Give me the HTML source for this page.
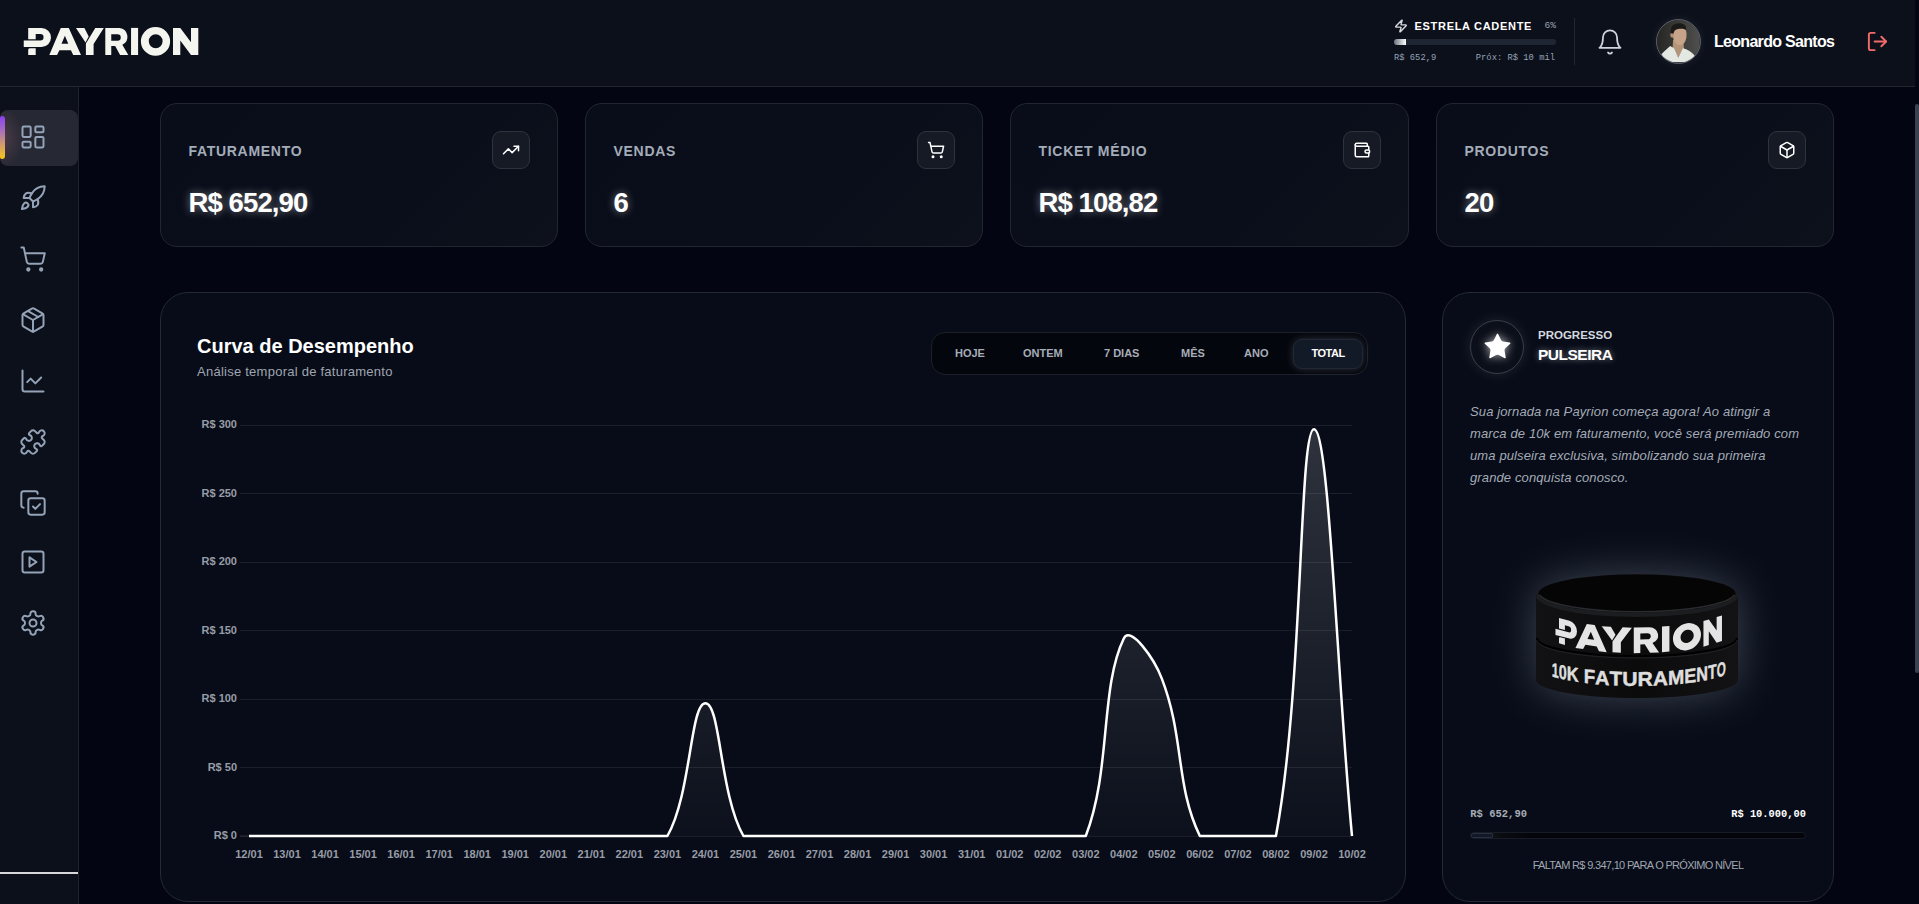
<!DOCTYPE html>
<html lang="pt-BR">
<head>
<meta charset="utf-8">
<title>Payrion Dashboard</title>
<style>
*{box-sizing:border-box;margin:0;padding:0}
html,body{width:1919px;height:904px;overflow:hidden;background:#030612;font-family:"Liberation Sans",sans-serif;color:#fff}
.abs{position:absolute}
svg.i{fill:none;stroke:currentColor;stroke-linecap:round;stroke-linejoin:round}
#header{position:absolute;left:0;top:0;width:1915px;height:87px;background:#0c101b;border-bottom:1px solid #23262f}
#sidebar{position:absolute;left:0;top:87px;width:79px;height:817px;background:#0c101a;border-right:1px solid #1e222c}
.card{position:absolute;background:linear-gradient(135deg,#090d19 0%,#0a0e1a 60%,#0d111c 100%);border:1px solid #222630;border-radius:17px}
.lbl{position:absolute;left:27.5px;top:37px;font-size:14px;font-weight:700;color:#a3acb9;letter-spacing:0.7px;line-height:20px;white-space:nowrap}
.val{position:absolute;left:27.5px;top:81px;font-size:27.5px;font-weight:700;color:#fff;line-height:36px;letter-spacing:-0.9px;text-shadow:0 0 8px rgba(255,255,255,.45);white-space:nowrap}
.ibox{position:absolute;right:27px;top:27px;width:38px;height:38px;border-radius:9px;background:#161a24;border:1px solid #2e323d;display:flex;align-items:center;justify-content:center;color:#fff}
.nav{position:absolute;left:18.7px;width:28px;height:28px;color:#94a3b8}
svg.chart{position:absolute;left:0;top:0}
</style>
</head>
<body>
<!-- HEADER -->
<div id="header">
  <svg class="abs" style="left:0;top:0" width="210" height="70" viewBox="0 0 210 70"><g fill="#f5f5f0">
<path d="M28.2,28 H41.5 A9.5,9.5 0 0 1 41.5,47 H23.75 V40.6 H40.3 A3.25,3.25 0 0 0 40.3,34.1 H35.7 V39.2 H28.2 Z"/>
<path d="M29.7,48.2 H35.7 V55 H28.2 V49.7 A1.5,1.5 0 0 1 29.7,48.2 Z"/>
<path d="M49.3,55 L60.8,28 H68.8 L81,55 H73.2 L70.9,50.3 H59.4 L57.05,55 Z M61.5,43.7 H68.3 L64.9,35.7 Z" fill-rule="evenodd"/>
<path d="M75.95,28 H84.4 L88.7,36.4 L85.5,42.6 Z"/>
<path d="M95.3,28 H103.8 L93.6,43.9 V55 H85.9 V43.6 Z"/>
<path d="M105.3,27.9 H119.5 A8.9,8.9 0 0 1 122.3,44.8 L128.3,55 H120.1 L115.2,45.9 H111.25 V55 H105.3 Z M111.25,34.2 H117.5 A3.25,3.25 0 0 1 117.5,40.7 H111.25 Z" fill-rule="evenodd"/>
<rect x="131.05" y="27.9" width="7.05" height="27.1"/>
<path d="M155.5,27.1 A14.6,14.35 0 1 1 155.5,55.8 A14.6,14.35 0 1 1 155.5,27.1 Z M155.7,34.2 A6.9,7 0 1 0 155.7,48.2 A6.9,7 0 1 0 155.7,34.2 Z" fill-rule="evenodd"/>
<path d="M173,27.9 H180.3 L191,42.2 V27.9 H198.3 V55 H191 L180.3,40.4 V55 H173 Z"/>
</g></svg>

  <!-- level progress -->
  <svg class="i abs" style="left:1393.7px;top:19px;color:#d8dbe0" width="14" height="14" viewBox="0 0 24 24" stroke-width="2.4"><path d="M4 14a1 1 0 0 1-.78-1.63l9.9-10.2a.5.5 0 0 1 .86.46l-1.92 6.02A1 1 0 0 0 13 10h7a1 1 0 0 1 .78 1.63l-9.9 10.2a.5.5 0 0 1-.86-.46l1.92-6.02A1 1 0 0 0 11 14z"/></svg>
  <div class="abs" style="left:1414.5px;top:19.3px;font-size:11px;font-weight:700;letter-spacing:0.7px;line-height:14px;white-space:nowrap">ESTRELA CADENTE</div>
  <div class="abs" style="left:1544.5px;top:19.5px;font-family:'Liberation Mono';font-size:9.5px;color:#9aa3b1;line-height:12px">6%</div>
  <div class="abs" style="left:1394.4px;top:39.4px;width:162px;height:6px;border-radius:3px;background:#1f2633;overflow:hidden"><div style="width:12px;height:6px;background:linear-gradient(90deg,#6b7280,#ffffff)"></div></div>
  <div class="abs" style="left:1394px;top:52px;font-family:'Liberation Mono';font-size:8.8px;color:#94a3b8;line-height:12px;white-space:nowrap">R$ 652,9</div>
  <div class="abs" style="left:1455px;top:52px;width:100px;text-align:right;font-family:'Liberation Mono';font-size:8.8px;color:#94a3b8;line-height:12px;white-space:nowrap">Próx: R$ 10 mil</div>
  <div class="abs" style="left:1574px;top:18px;width:1px;height:47px;background:#232733"></div>

  <svg class="i abs" style="left:1596.3px;top:27.6px;color:#cfd3da" width="28" height="28" viewBox="0 0 24 24" stroke-width="1.5"><path d="M6 8a6 6 0 0 1 12 0c0 7 3 9 3 9H3s3-2 3-9"/><path d="M10.3 21a1.94 1.94 0 0 0 3.4 0"/></svg>

  <!-- avatar -->
  <div class="abs" style="left:1656px;top:19px;width:45px;height:45px;border-radius:50%;border:1.5px solid #5b606c;overflow:hidden;background:#3a3c3a;box-shadow:0 0 10px rgba(255,255,255,.08)">
    <svg width="42" height="42" viewBox="0 0 44.5 44.5" style="position:absolute;left:0;top:0">
      <defs><linearGradient id="avbg" x1="0" y1="0" x2="1" y2="0"><stop offset="0" stop-color="#262725"/><stop offset="0.5" stop-color="#393a37"/><stop offset="1" stop-color="#4e4f4c"/></linearGradient></defs>
      <rect width="44.5" height="44.5" fill="url(#avbg)"/>
      <path d="M17,21 L28,21 L28.5,30 L22.5,40 L16.5,30 Z" fill="#b39479"/>
      <path d="M2,40 C5,35 9,32 14,27.5 L18,30 L22.5,40 L27.5,30 C32,31 37,34 41,39 L44.5,44.5 L0,44.5 Z" fill="#e4e8e2"/>
      <path d="M16.5,15 C16.5,9 19.5,7 24,7 C29,7 31.3,10 31.3,15.5 C31.3,21 29.5,25.5 25,26.5 C21,27 17.2,23 16.5,15 Z" fill="#c6a389"/>
      <ellipse cx="16" cy="16" rx="1.9" ry="2.9" fill="#b0907a"/>
      <path d="M14.6,14 C13.8,7 17,3.4 23,3.4 C28.5,3.4 31.5,6 30.8,10.5 C28,8.8 23,8.8 19,10.8 L17.2,14.5 Z" fill="#1a1a18"/>
    </svg>
  </div>
  <div class="abs" style="left:1714px;top:32px;font-size:16px;font-weight:700;letter-spacing:-0.7px;line-height:20px;white-space:nowrap;color:#fff">Leonardo Santos</div>
  <svg class="i abs" style="left:1866px;top:30px;color:#f26b6b" width="23" height="23" viewBox="0 0 24 24" stroke-width="2"><path d="M9 21H5a2 2 0 0 1-2-2V5a2 2 0 0 1 2-2h4"/><polyline points="16 17 21 12 16 7"/><line x1="21" x2="9" y1="12" y2="12"/></svg>
</div>
<div class="abs" style="left:1915px;top:104px;width:4px;height:569px;border-radius:2px;background:#3a4250"></div>

<!-- SIDEBAR -->
<div id="sidebar">
  <div class="abs" style="left:0;top:23px;width:78px;height:56px;border-radius:8px;background:radial-gradient(ellipse 22px 30px at 2px 50%,rgba(150,95,110,.35),rgba(150,95,110,0) 100%),#262833"></div>
  <div class="abs" style="left:0;top:29px;width:5px;height:43px;border-radius:2px 3px 3px 2px;background:linear-gradient(180deg,#8a3ff2 0%,#a468c8 30%,#d29a70 65%,#f7c81a 100%)"></div>
  <svg class="i nav" style="top:36.3px" viewBox="0 0 24 24" stroke-width="1.7"><rect width="7" height="9" x="3" y="3" rx="1"/><rect width="7" height="5" x="14" y="3" rx="1"/><rect width="7" height="9" x="14" y="12" rx="1"/><rect width="7" height="5" x="3" y="16" rx="1"/></svg>
  <svg class="i nav" style="top:97px" viewBox="0 0 24 24" stroke-width="1.7"><path d="M4.5 16.5c-1.5 1.26-2 5-2 5s3.740-.5 5-2c.71-.84.7-2.130-.09-2.910a2.180 2.180 0 0 0-2.910-.09z"/><path d="m12 15-3-3a22 22 0 0 1 2-3.950A12.880 12.880 0 0 1 22 2c0 2.720-.78 7.500-6 11a22.350 22.350 0 0 1-4 2z"/><path d="M9 12H4s.55-3.030 2-4c1.620-1.080 5 0 5 0"/><path d="M12 15v5s3.030-.55 4-2c1.080-1.620 0-5 0-5"/></svg>
  <svg class="i nav" style="top:158px" viewBox="0 0 24 24" stroke-width="1.7"><circle cx="8" cy="21" r="1"/><circle cx="19" cy="21" r="1"/><path d="M2.050 2.050h2l2.660 12.420a2 2 0 0 0 2 1.580h9.780a2 2 0 0 0 1.950-1.570l1.650-7.430H5.120"/></svg>
  <svg class="i nav" style="top:218.5px" viewBox="0 0 24 24" stroke-width="1.7"><path d="m7.500 4.270 9 5.150"/><path d="M21 8a2 2 0 0 0-1-1.730l-7-4a2 2 0 0 0-2 0l-7 4A2 2 0 0 0 3 8v8a2 2 0 0 0 1 1.730l7 4a2 2 0 0 0 2 0l7-4A2 2 0 0 0 21 16Z"/><path d="m3.300 7 8.700 5 8.700-5"/><path d="M12 22V12"/></svg>
  <svg class="i nav" style="top:279.8px" viewBox="0 0 24 24" stroke-width="1.7"><path d="M3 3v16a2 2 0 0 0 2 2h16"/><path d="m19 9-5 5-4-4-3 3"/></svg>
  <svg class="i nav" style="top:340.6px" viewBox="0 0 24 24" stroke-width="1.7"><path d="M19.439 7.850c-.049.322.059.648.289.878l1.568 1.568c.47.47.706 1.087.706 1.704s-.235 1.233-.706 1.704l-1.611 1.611a.98.98 0 0 1-.837.276c-.47-.07-.802-.48-.968-.925a2.501 2.501 0 1 0-3.214 3.214c.446.166.855.497.925.968a.979.979 0 0 1-.276.837l-1.61 1.61a2.404 2.404 0 0 1-1.705.707 2.402 2.402 0 0 1-1.704-.706l-1.568-1.568a1.026 1.026 0 0 0-.877-.29c-.493.074-.84.504-1.020.968a2.500 2.500 0 1 1-3.237-3.237c.464-.18.894-.527.967-1.020a1.026 1.026 0 0 0-.289-.877l-1.568-1.568A2.402 2.402 0 0 1 1.998 12c0-.617.236-1.234.706-1.704L4.230 8.770c.24-.24.581-.353.917-.303.515.077.877.528 1.073 1.010a2.500 2.500 0 1 0 3.259-3.259c-.482-.196-.933-.558-1.010-1.073-.05-.336.062-.676.303-.917l1.525-1.525A2.402 2.402 0 0 1 12 1.998c.617 0 1.234.236 1.704.706l1.568 1.568c.23.23.556.338.877.29.493-.074.84-.504 1.020-.968a2.500 2.500 0 1 1 3.237 3.237c-.464.18-.894.527-.967 1.020Z"/></svg>
  <svg class="i nav" style="top:401.7px" viewBox="0 0 24 24" stroke-width="1.7"><path d="m12 15 2 2 4-4"/><rect width="14" height="14" x="8" y="8" rx="2" ry="2"/><path d="M4 16c-1.100 0-2-.9-2-2V4c0-1.100.9-2 2-2h10c1.100 0 2 .9 2 2"/></svg>
  <svg class="i nav" style="top:461.4px" viewBox="0 0 24 24" stroke-width="1.7"><rect width="18" height="18" x="3" y="3" rx="2"/><path d="m9 8 6 4-6 4Z"/></svg>
  <svg class="i nav" style="top:522.4px" viewBox="0 0 24 24" stroke-width="1.7"><path d="M12.220 2h-.44a2 2 0 0 0-2 2v.18a2 2 0 0 1-1 1.730l-.43.25a2 2 0 0 1-2 0l-.15-.08a2 2 0 0 0-2.730.73l-.22.38a2 2 0 0 0 .73 2.730l.15.1a2 2 0 0 1 1 1.720v.51a2 2 0 0 1-1 1.740l-.15.09a2 2 0 0 0-.73 2.730l.22.38a2 2 0 0 0 2.730.73l.15-.08a2 2 0 0 1 2 0l.43.25a2 2 0 0 1 1 1.730V20a2 2 0 0 0 2 2h.44a2 2 0 0 0 2-2v-.18a2 2 0 0 1 1-1.730l.43-.25a2 2 0 0 1 2 0l.15.08a2 2 0 0 0 2.730-.73l.22-.39a2 2 0 0 0-.73-2.730l-.15-.08a2 2 0 0 1-1-1.740v-.5a2 2 0 0 1 1-1.740l.15-.09a2 2 0 0 0 .73-2.730l-.22-.38a2 2 0 0 0-2.730-.73l-.15.08a2 2 0 0 1-2 0l-.43-.25a2 2 0 0 1-1-1.730V4a2 2 0 0 0-2-2z"/><circle cx="12" cy="12" r="3"/></svg>
  <div class="abs" style="left:0;top:785px;width:78px;height:1.5px;background:#d6d8dc"></div>
</div>

<!-- STAT CARDS -->
<div class="card" style="left:160px;top:103px;width:398px;height:144px">
  <div class="lbl">FATURAMENTO</div>
  <div class="val">R$ 652,90</div>
  <div class="ibox"><svg class="i" width="18" height="18" viewBox="0 0 24 24" stroke-width="2"><polyline points="22 7 13.5 15.5 8.5 10.5 2 17"/><polyline points="16 7 22 7 22 13"/></svg></div>
</div>
<div class="card" style="left:585px;top:103px;width:398px;height:144px">
  <div class="lbl">VENDAS</div>
  <div class="val">6</div>
  <div class="ibox"><svg class="i" width="18" height="18" viewBox="0 0 24 24" stroke-width="2"><circle cx="8" cy="21" r="1"/><circle cx="19" cy="21" r="1"/><path d="M2.05 2.05h2l2.66 12.42a2 2 0 0 0 2 1.58h9.78a2 2 0 0 0 1.95-1.57l1.65-7.43H5.12"/></svg></div>
</div>
<div class="card" style="left:1010px;top:103px;width:399px;height:144px">
  <div class="lbl">TICKET MÉDIO</div>
  <div class="val">R$ 108,82</div>
  <div class="ibox"><svg class="i" width="18" height="18" viewBox="0 0 24 24" stroke-width="2"><path d="M19 7V4a1 1 0 0 0-1-1H5a2 2 0 0 0 0 4h15a1 1 0 0 1 1 1v4h-3a2 2 0 0 0 0 4h3a1 1 0 0 0 1-1v-2a1 1 0 0 0-1-1"/><path d="M3 5v14a2 2 0 0 0 2 2h15a1 1 0 0 0 1-1v-4"/></svg></div>
</div>
<div class="card" style="left:1436px;top:103px;width:398px;height:144px">
  <div class="lbl">PRODUTOS</div>
  <div class="val">20</div>
  <div class="ibox"><svg class="i" width="18" height="18" viewBox="0 0 24 24" stroke-width="2"><path d="M21 8a2 2 0 0 0-1-1.73l-7-4a2 2 0 0 0-2 0l-7 4A2 2 0 0 0 3 8v8a2 2 0 0 0 1 1.73l7 4a2 2 0 0 0 2 0l7-4A2 2 0 0 0 21 16Z"/><path d="m3.3 7 8.7 5 8.7-5"/><path d="M12 22V12"/></svg></div>
</div>

<!-- CHART CARD -->
<div class="card" style="left:160px;top:292px;width:1246px;height:610px;border-radius:28px;border-color:#252933;background:#070c18"></div>
<div class="abs" style="left:197px;top:333px;font-size:20px;font-weight:700;line-height:26px;white-space:nowrap">Curva de Desempenho</div>
<div class="abs" style="left:197px;top:362.6px;font-size:13px;color:#a0a6b1;line-height:18px;letter-spacing:0.25px;white-space:nowrap">Análise temporal de faturamento</div>
<div class="abs" style="left:931px;top:332px;width:437px;height:43px;border-radius:14px;background:#04060d;border:1px solid #1c2029"></div>
<div class="abs" style="left:1293px;top:339px;width:70px;height:30px;border-radius:9px;background:#121927;border:1px solid #222837;box-shadow:0 0 9px rgba(255,255,255,.17)"></div>
<div class="abs" style="left:931px;top:346px;width:437px;height:14px;font-size:11px;font-weight:700;color:#a7adb8;line-height:14px;white-space:nowrap">
  <span class="abs" style="left:24px">HOJE</span>
  <span class="abs" style="left:92px">ONTEM</span>
  <span class="abs" style="left:173px">7 DIAS</span>
  <span class="abs" style="left:250px">MÊS</span>
  <span class="abs" style="left:313px">ANO</span>
  <span class="abs" style="left:380.5px;color:#fff;letter-spacing:-0.5px">TOTAL</span>
</div>
<svg class="chart" width="1919" height="904" viewBox="0 0 1919 904">
<defs><linearGradient id="fg" x1="0" y1="425" x2="0" y2="836" gradientUnits="userSpaceOnUse">
<stop offset="0" stop-color="#ffffff" stop-opacity="0.16"/><stop offset="1" stop-color="#ffffff" stop-opacity="0.02"/></linearGradient></defs>
<g stroke="#1b1f29" stroke-width="1" shape-rendering="crispEdges"><line x1="240" y1="425.0" x2="1352" y2="425.0" /><line x1="240" y1="493.5" x2="1352" y2="493.5" /><line x1="240" y1="562.0" x2="1352" y2="562.0" /><line x1="240" y1="630.5" x2="1352" y2="630.5" /><line x1="240" y1="699.0" x2="1352" y2="699.0" /><line x1="240" y1="767.5" x2="1352" y2="767.5" /><line x1="240" y1="836.0" x2="1352" y2="836.0" /></g>
<line x1="240" y1="836" x2="249" y2="836" stroke="#2a2e38" stroke-width="1"/>
<g fill="#979ca6" font-family="Liberation Sans" font-weight="700" font-size="11" text-anchor="end"><text x="237" y="428.4">R$ 300</text><text x="237" y="496.9">R$ 250</text><text x="237" y="565.4">R$ 200</text><text x="237" y="633.9">R$ 150</text><text x="237" y="702.4">R$ 100</text><text x="237" y="770.9">R$ 50</text><text x="237" y="839.4">R$ 0</text></g>
<g fill="#979ca6" font-family="Liberation Sans" font-weight="700" font-size="11" text-anchor="middle"><text x="249.0" y="858">12/01</text><text x="287.0" y="858">13/01</text><text x="325.1" y="858">14/01</text><text x="363.1" y="858">15/01</text><text x="401.1" y="858">16/01</text><text x="439.2" y="858">17/01</text><text x="477.2" y="858">18/01</text><text x="515.2" y="858">19/01</text><text x="553.3" y="858">20/01</text><text x="591.3" y="858">21/01</text><text x="629.3" y="858">22/01</text><text x="667.4" y="858">23/01</text><text x="705.4" y="858">24/01</text><text x="743.4" y="858">25/01</text><text x="781.5" y="858">26/01</text><text x="819.5" y="858">27/01</text><text x="857.6" y="858">28/01</text><text x="895.6" y="858">29/01</text><text x="933.6" y="858">30/01</text><text x="971.7" y="858">31/01</text><text x="1009.7" y="858">01/02</text><text x="1047.7" y="858">02/02</text><text x="1085.8" y="858">03/02</text><text x="1123.8" y="858">04/02</text><text x="1161.8" y="858">05/02</text><text x="1199.9" y="858">06/02</text><text x="1237.9" y="858">07/02</text><text x="1275.9" y="858">08/02</text><text x="1314.0" y="858">09/02</text><text x="1352.0" y="858">10/02</text></g>
<path d="M249.00,836.00C264.21,836.00,271.82,836.00,287.03,836.00C302.25,836.00,309.86,836.00,325.07,836.00C340.28,836.00,347.89,836.00,363.10,836.00C378.32,836.00,385.92,836.00,401.14,836.00C416.35,836.00,423.96,836.00,439.17,836.00C454.39,836.00,461.99,836.00,477.21,836.00C492.42,836.00,500.03,836.00,515.24,836.00C530.46,836.00,538.06,836.00,553.28,836.00C568.49,836.00,576.10,836.00,591.31,836.00C606.52,836.00,614.13,836.00,629.34,836.00C644.56,836.00,660.81,836.00,667.38,836.00C691.24,794.37,690.20,703.25,705.41,703.25C720.63,703.25,719.59,794.37,743.45,836.00C750.02,836.00,766.27,836.00,781.48,836.00C796.70,836.00,804.30,836.00,819.52,836.00C834.73,836.00,842.34,836.00,857.55,836.00C872.77,836.00,880.37,836.00,895.59,836.00C910.80,836.00,918.41,836.00,933.62,836.00C948.83,836.00,956.44,836.00,971.66,836.00C986.87,836.00,994.48,836.00,1009.69,836.00C1024.90,836.00,1032.51,836.00,1047.72,836.00C1062.94,836.00,1080.92,836.00,1085.76,836.00C1111.35,769.54,1099.93,687.84,1123.79,638.45C1130.35,624.87,1154.08,658.47,1161.83,678.59C1184.51,737.49,1175.22,785.01,1199.86,836.00C1205.65,836.00,1222.68,836.00,1237.90,836.00C1253.11,836.00,1273.34,836.00,1275.93,836.00C1303.77,687.16,1298.75,429.25,1313.97,429.25C1329.18,429.25,1336.79,673.30,1352.00,836.00L1352,836L249,836Z" fill="url(#fg)"/>
<path d="M249.00,836.00C264.21,836.00,271.82,836.00,287.03,836.00C302.25,836.00,309.86,836.00,325.07,836.00C340.28,836.00,347.89,836.00,363.10,836.00C378.32,836.00,385.92,836.00,401.14,836.00C416.35,836.00,423.96,836.00,439.17,836.00C454.39,836.00,461.99,836.00,477.21,836.00C492.42,836.00,500.03,836.00,515.24,836.00C530.46,836.00,538.06,836.00,553.28,836.00C568.49,836.00,576.10,836.00,591.31,836.00C606.52,836.00,614.13,836.00,629.34,836.00C644.56,836.00,660.81,836.00,667.38,836.00C691.24,794.37,690.20,703.25,705.41,703.25C720.63,703.25,719.59,794.37,743.45,836.00C750.02,836.00,766.27,836.00,781.48,836.00C796.70,836.00,804.30,836.00,819.52,836.00C834.73,836.00,842.34,836.00,857.55,836.00C872.77,836.00,880.37,836.00,895.59,836.00C910.80,836.00,918.41,836.00,933.62,836.00C948.83,836.00,956.44,836.00,971.66,836.00C986.87,836.00,994.48,836.00,1009.69,836.00C1024.90,836.00,1032.51,836.00,1047.72,836.00C1062.94,836.00,1080.92,836.00,1085.76,836.00C1111.35,769.54,1099.93,687.84,1123.79,638.45C1130.35,624.87,1154.08,658.47,1161.83,678.59C1184.51,737.49,1175.22,785.01,1199.86,836.00C1205.65,836.00,1222.68,836.00,1237.90,836.00C1253.11,836.00,1273.34,836.00,1275.93,836.00C1303.77,687.16,1298.75,429.25,1313.97,429.25C1329.18,429.25,1336.79,673.30,1352.00,836.00" fill="none" stroke="#ffffff" stroke-width="2.5" stroke-linejoin="round" stroke-linecap="butt"/>
</svg>

<!-- PROGRESS CARD -->
<div class="card" style="left:1442px;top:292px;width:392px;height:610px;border-radius:28px;border-color:#252933;background:#070c18"></div>
<div class="abs" style="left:1470px;top:320px;width:54px;height:54px;border-radius:50%;border:1px solid #3a3e48;background:#0b0f19;box-shadow:0 0 14px rgba(255,255,255,.10)"></div>
<svg class="abs" style="left:1481.5px;top:331px;filter:drop-shadow(0 0 5px rgba(255,255,255,.7))" width="31" height="31" viewBox="0 0 24 24" fill="#fff"><path d="M11.525 2.295a.53.53 0 0 1 .95 0l2.31 4.679a2.123 2.123 0 0 0 1.595 1.16l5.166.756a.53.53 0 0 1 .294.904l-3.736 3.638a2.123 2.123 0 0 0-.611 1.878l.882 5.14a.53.53 0 0 1-.771.56l-4.618-2.428a2.122 2.122 0 0 0-1.973 0L6.396 21.01a.53.53 0 0 1-.77-.56l.881-5.139a2.122 2.122 0 0 0-.611-1.879L2.16 9.795a.53.53 0 0 1 .294-.906l5.165-.755a2.122 2.122 0 0 0 1.597-1.16z"/></svg>
<div class="abs" style="left:1538px;top:328px;font-size:11.5px;font-weight:700;letter-spacing:0px;color:#d5d8de;line-height:14px;white-space:nowrap">PROGRESSO</div>
<div class="abs" style="left:1538px;top:345px;font-size:15.5px;font-weight:700;color:#fff;line-height:20px;letter-spacing:-0.5px;text-shadow:0 0 6px rgba(255,255,255,.45);white-space:nowrap">PULSEIRA</div>
<div class="abs" style="left:1470px;top:401px;width:340px;font-size:13px;font-style:italic;color:#a4abb6;line-height:22px;letter-spacing:0.12px">Sua jornada na Payrion começa agora! Ao atingir a<br>marca de 10k em faturamento, você será premiado com<br>uma pulseira exclusiva, simbolizando sua primeira<br>grande conquista conosco.</div>

<svg class="abs" style="left:1442px;top:292px" width="392" height="610" viewBox="1442 292 392 610">
<defs>
<filter id="blur" x="-50%" y="-50%" width="200%" height="200%"><feGaussianBlur stdDeviation="22"/></filter>
<linearGradient id="band" x1="1536" y1="0" x2="1738" y2="0" gradientUnits="userSpaceOnUse"><stop offset="0" stop-color="#121214"/><stop offset="0.5" stop-color="#0b0b0c"/><stop offset="1" stop-color="#131315"/></linearGradient>
</defs>
<path d="M1536,595 V680 A101,18 0 0 0 1738,680 V595 A101,21 0 0 0 1536,595 Z" fill="#a3a9b8" opacity="0.36" filter="url(#blur)"/>
<path d="M1536,595 V680 A101,18 0 0 0 1738,680 V595 Z" fill="url(#band)"/>
<ellipse cx="1637" cy="595.5" rx="101" ry="21.5" fill="#1c1d20"/>
<ellipse cx="1637" cy="593.5" rx="98.5" ry="19" fill="#050506"/>
<path d="M1539.5,595 A98.5,19.5 0 0 0 1734.5,595" fill="none" stroke="#2a2b2f" stroke-width="1.6"/>
<path d="M1537,638 A100,18 0 0 0 1737,638" fill="none" stroke="#000" stroke-width="2.2"/>
<path d="M1537,640 A100,18 0 0 0 1737,640" fill="none" stroke="#222226" stroke-width="1"/>
<g fill="#e4e4e4"><g transform="matrix(0.7894,0.2071,0,0.944,1536.739,585.608)"><path d="M28.2,28 H41.5 A9.5,9.5 0 0 1 41.5,47 H23.75 V40.6 H40.3 A3.25,3.25 0 0 0 40.3,34.1 H35.7 V39.2 H28.2 Z" fill-rule="evenodd"/><path d="M29.7,48.2 H35.7 V55 H28.2 V49.7 A1.5,1.5 0 0 1 29.7,48.2 Z" fill-rule="evenodd"/></g><g transform="matrix(0.9850,0.1344,0,0.944,1526.901,589.369)"><path d="M49.3,55 L60.8,28 H68.8 L81,55 H73.2 L70.9,50.3 H59.4 L57.05,55 Z M61.5,43.7 H68.3 L64.9,35.7 Z" fill-rule="evenodd"/></g><g transform="matrix(1.0837,0.0590,0,0.944,1519.409,595.229)"><path d="M75.95,28 H84.4 L88.7,36.4 L85.5,42.6 Z" fill-rule="evenodd"/><path d="M95.3,28 H103.8 L93.6,43.9 V55 H85.9 V43.6 Z" fill-rule="evenodd"/></g><g transform="matrix(1.1011,-0.0276,0,0.944,1517.820,604.186)"><path d="M105.3,27.9 H119.5 A8.9,8.9 0 0 1 122.3,44.8 L128.3,55 H120.1 L115.2,45.9 H111.25 V55 H105.3 Z M111.25,34.2 H117.5 A3.25,3.25 0 0 1 117.5,40.7 H111.25 Z" fill-rule="evenodd"/></g><g transform="matrix(1.0603,-0.0841,0,0.944,1523.016,611.284)"><path d="M131.05,27.9 H138.1 V55 H131.05 Z" fill-rule="evenodd"/></g><g transform="matrix(0.9613,-0.1462,0,0.944,1537.470,620.282)"><path d="M155.5,27.1 A14.6,14.35 0 1 1 155.5,55.8 A14.6,14.35 0 1 1 155.5,27.1 Z M155.7,34.2 A6.9,7 0 1 0 155.7,48.2 A6.9,7 0 1 0 155.7,34.2 Z" fill-rule="evenodd"/></g><g transform="matrix(0.7321,-0.2216,0,0.944,1576.802,633.094)"><path d="M173,27.9 H180.3 L191,42.2 V27.9 H198.3 V55 H191 L180.3,40.4 V55 H173 Z" fill-rule="evenodd"/></g></g>
<g font-family="Liberation Sans" font-weight="700" font-size="20" fill="#dedede" stroke="#dedede" stroke-width="0.45" text-anchor="middle"><text transform="matrix(0.6256,0.1830,0,1,1555.338,677.152)" x="0" y="0">1</text><text transform="matrix(0.7217,0.1662,0,1,1562.840,679.096)" x="0" y="0">0</text><text transform="matrix(0.8199,0.1441,0,1,1572.709,681.082)" x="0" y="0">K</text><text transform="matrix(0.9375,0.1067,0,1,1589.360,683.458)" x="0" y="0">F</text><text transform="matrix(0.9984,0.0778,0,1,1602.284,684.690)" x="0" y="0">A</text><text transform="matrix(1.0397,0.0473,0,1,1615.891,685.525)" x="0" y="0">T</text><text transform="matrix(1.0605,0.0159,0,1,1629.912,685.947)" x="0" y="0">U</text><text transform="matrix(1.0596,-0.0185,0,1,1645.253,685.928)" x="0" y="0">R</text><text transform="matrix(1.0342,-0.0524,0,1,1660.404,685.415)" x="0" y="0">A</text><text transform="matrix(0.9802,-0.0876,0,1,1676.103,684.323)" x="0" y="0">M</text><text transform="matrix(0.9033,-0.1193,0,1,1690.260,682.768)" x="0" y="0">E</text><text transform="matrix(0.8120,-0.1461,0,1,1702.195,680.921)" x="0" y="0">N</text><text transform="matrix(0.7080,-0.1688,0,1,1712.343,678.818)" x="0" y="0">T</text><text transform="matrix(0.5850,-0.1890,0,1,1721.337,676.330)" x="0" y="0">O</text></g>
</svg>
<div class="abs" style="left:1470.3px;top:807.8px;font-family:'Liberation Mono';font-size:10.5px;font-weight:700;color:#a8adb6;line-height:13px;white-space:nowrap">R$ 652,90</div>
<div class="abs" style="left:1706px;top:807.8px;width:100px;text-align:right;font-family:'Liberation Mono';font-size:10.4px;font-weight:700;color:#fff;line-height:13px;white-space:nowrap">R$ 10.000,00</div>
<div class="abs" style="left:1470px;top:832px;width:336px;height:7px;border-radius:3.5px;background:linear-gradient(90deg,#202126 0px,#0b0c10 30px,#03050b 60px,#03050b 100%);border:1px solid #181c26;overflow:hidden"><div style="width:22px;height:100%;border-radius:2px;background:#121827;box-shadow:inset 0 0 0 1px #283042"></div></div>
<div class="abs" style="left:1442px;top:858px;width:392px;text-align:center;font-size:11px;color:#a0a6b0;letter-spacing:-0.68px;line-height:14px;white-space:nowrap">FALTAM R$ 9.347,10 PARA O PRÓXIMO NÍVEL</div>

</body>
</html>
